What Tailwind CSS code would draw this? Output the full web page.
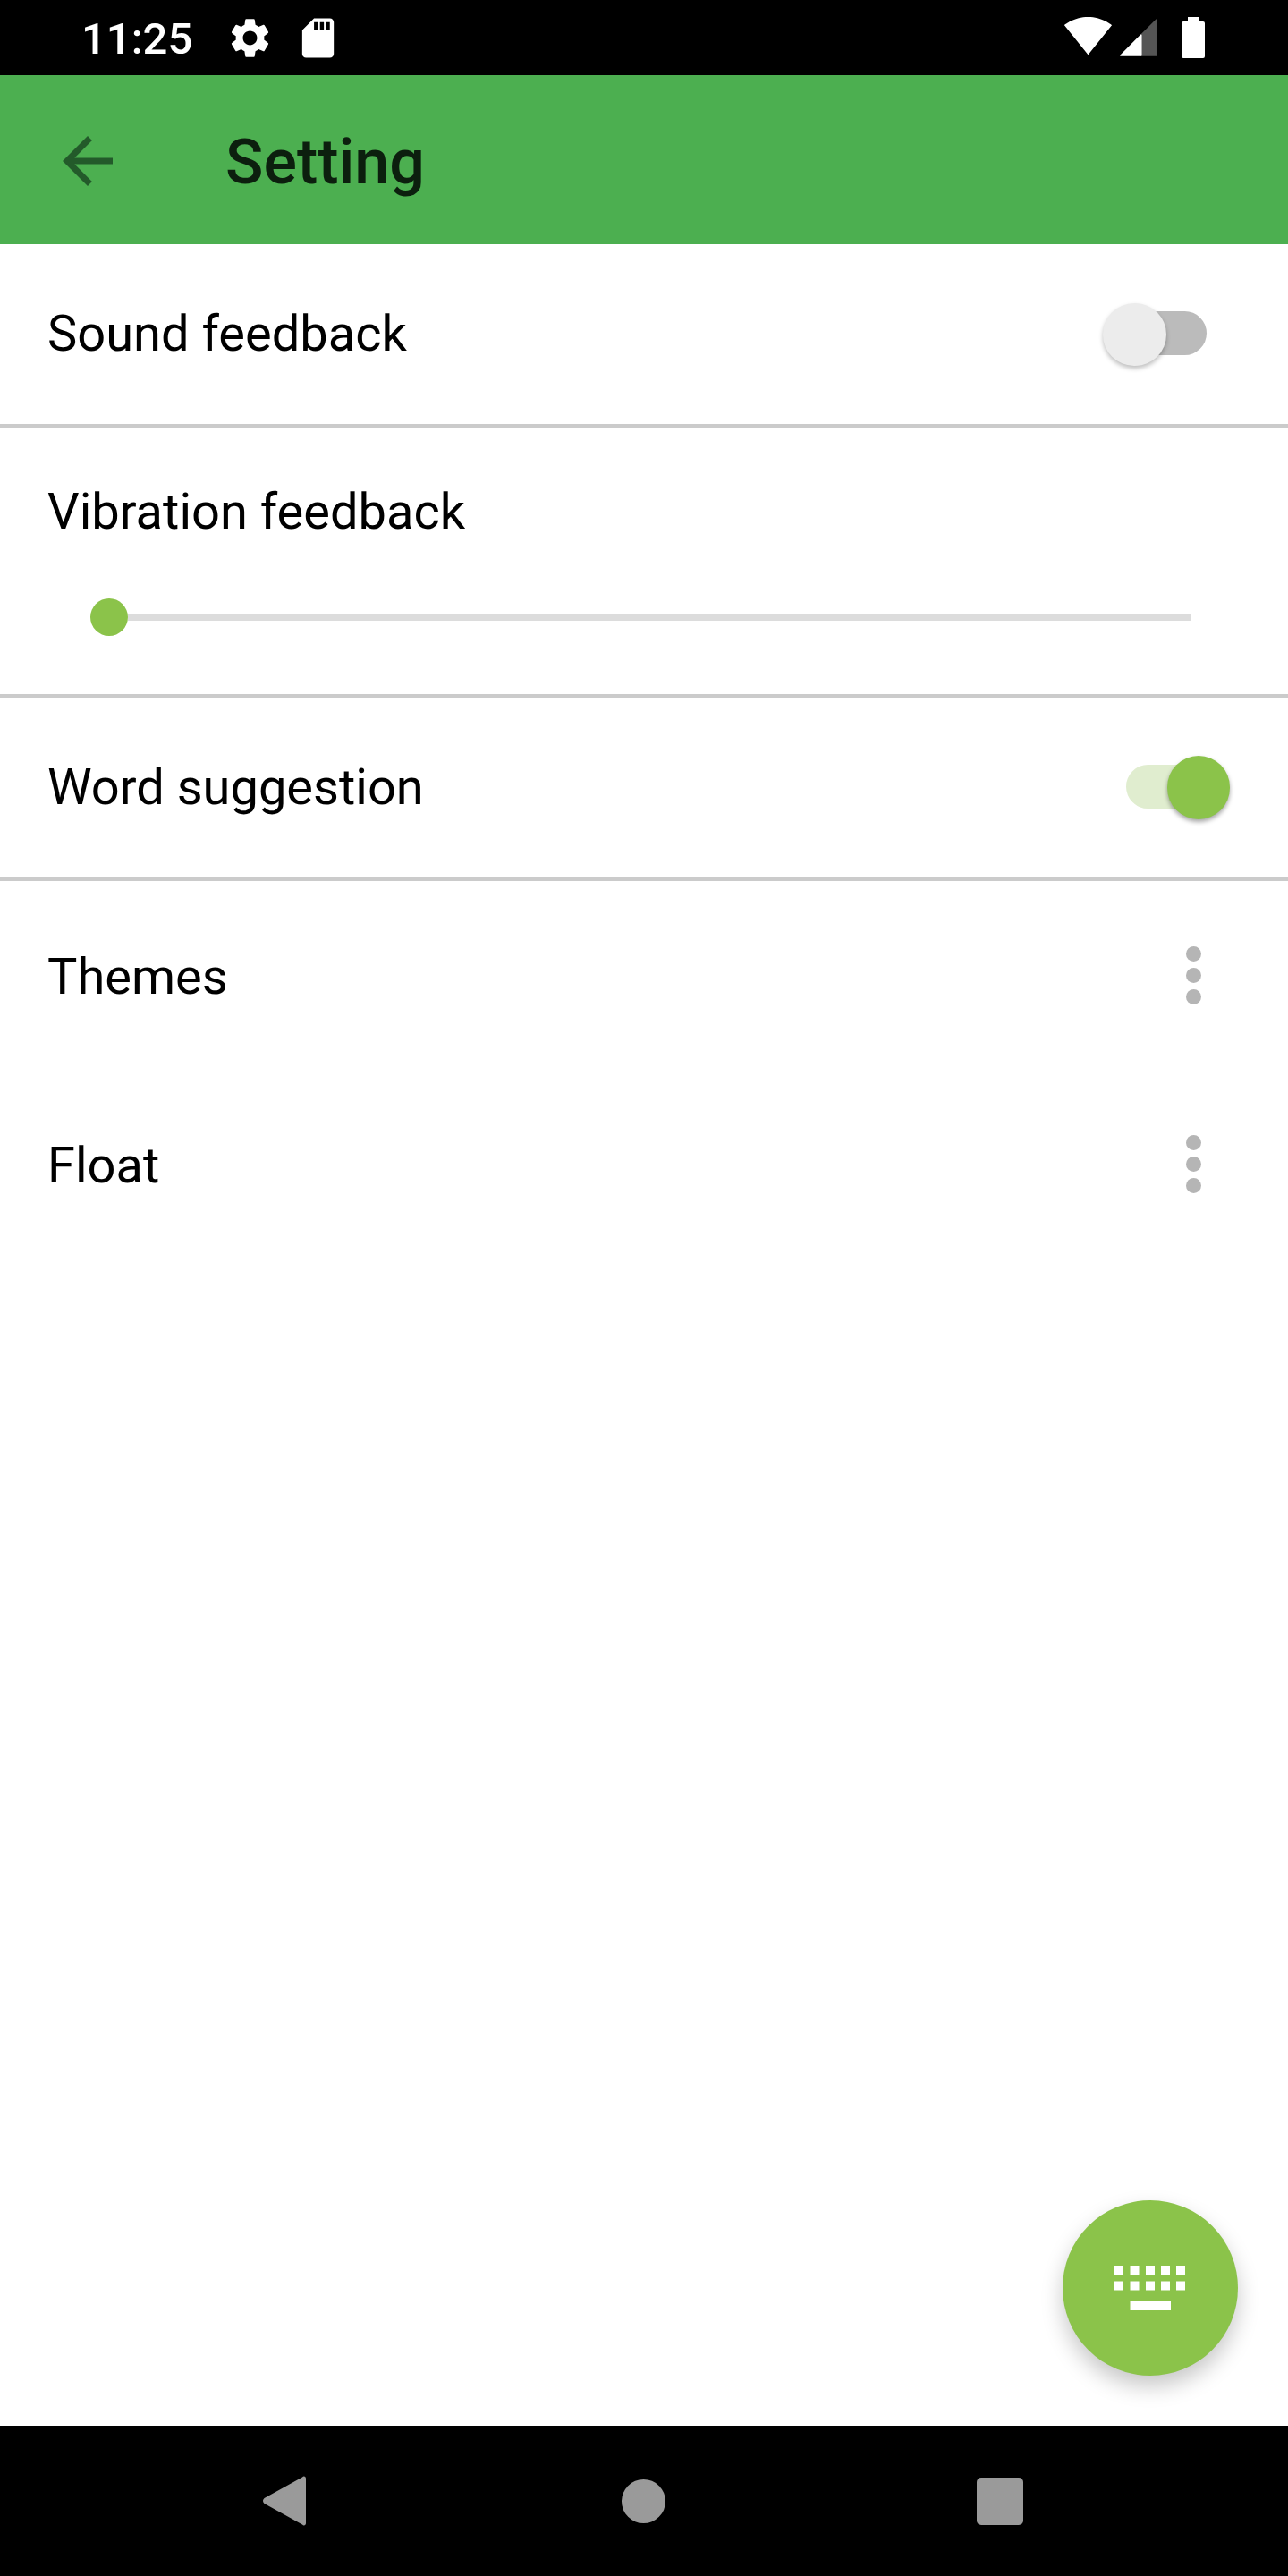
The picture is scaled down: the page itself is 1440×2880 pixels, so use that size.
<!DOCTYPE html>
<html><head><meta charset="utf-8"><script src="https://cdn.jsdelivr.net/npm/@tailwindcss/browser@4"></script></head>
<body class="bg-white">
<div class="w-[1440px] h-[2880px] flex flex-col bg-white font-['Roboto',sans-serif] text-black">
  <!-- status bar -->
  <div class="h-[84px] bg-black flex items-center shrink-0">
    <span class="ml-[91px] w-[162px] text-[49px] leading-none font-medium text-white mt-[2px]">11:25</span>
    <svg class="w-[53px] h-[53px]" viewBox="0 0 24 24" fill="#fff"><path d="M19.14 12.94c.04-.3.06-.61.06-.94 0-.32-.02-.64-.07-.94l2.03-1.58a.49.49 0 0 0 .12-.61l-1.92-3.32a.488.488 0 0 0-.59-.22l-2.39.96c-.5-.38-1.03-.7-1.62-.94l-.36-2.54a.484.484 0 0 0-.48-.41h-3.84c-.24 0-.43.17-.47.41l-.36 2.54c-.59.24-1.13.57-1.62.94l-2.39-.96c-.22-.08-.47 0-.59.22L2.74 8.87c-.12.21-.08.47.12.61l2.03 1.58c-.05.3-.09.63-.09.94s.02.64.07.94l-2.03 1.58a.49.49 0 0 0-.12.61l1.92 3.32c.12.22.37.29.59.22l2.39-.96c.5.38 1.03.7 1.62.94l.36 2.54c.05.24.24.41.48.41h3.84c.24 0 .44-.17.47-.41l.36-2.54c.59-.24 1.13-.56 1.62-.94l2.39.96c.22.08.47 0 .59-.22l1.92-3.32c.12-.22.07-.47-.12-.61l-2.01-1.58zM12 15.6c-1.98 0-3.6-1.62-3.6-3.6s1.62-3.6 3.6-3.6 3.6 1.62 3.6 3.6-1.62 3.6-3.6 3.6z"/></svg>
    <svg class="ml-[23px] w-[53px] h-[53px]" viewBox="0 0 24 24" fill="#fff"><path d="M18 2h-8L4.02 8 4 20c0 1.1.9 2 2 2h12c1.1 0 2-.9 2-2V4c0-1.1-.9-2-2-2zm-6 6h-2V4h2v4zm3 0h-2V4h2v4zm3 0h-2V4h2v4z"/></svg>
    <svg class="ml-auto w-[55px] h-[55px] -mt-[6px]" viewBox="0 0 24 24" fill="#fff"><path d="M12.01 21.49L23.64 7c-.45-.34-4.93-4-11.64-4C5.28 3 .81 6.66.36 7l11.64 14.49.01.01.01-.01z"/></svg>
    <svg class="ml-[4px] w-[50px] h-[50px]" viewBox="0 0 24 24"><path d="M13.3 21.6H21.6V2.4L13.3 10.7z" fill="#555" stroke="#555" stroke-width=".8" stroke-linejoin="round"/><path d="M2.4 21.6H13.3V10.7z" fill="#fff" stroke="#fff" stroke-width=".8" stroke-linejoin="round"/></svg>
    <svg class="ml-[23px] mr-[93px] w-[26px] h-[46px]" viewBox="0 0 26 46" fill="#fff"><path d="M7 0h12v5h5a2 2 0 0 1 2 2v37a2 2 0 0 1-2 2H2a2 2 0 0 1-2-2V7a2 2 0 0 1 2-2h5z"/></svg>
  </div>
  <!-- app bar -->
  <div class="h-[189px] bg-[#4caf50] flex items-center shrink-0">
    <svg class="ml-[56px] w-[84px] h-[84px] mt-[2px]" viewBox="0 0 24 24" fill="#235a2a"><path d="M20 11H7.83l5.59-5.59L12 4l-8 8 8 8 1.41-1.41L7.83 13H20v-2z"/></svg>
    <span class="ml-[112px] text-[70px] leading-none font-medium text-[#0c1f0e] mt-[4px]">Setting</span>
  </div>
  <!-- rows -->
  <div class="h-[201px] flex items-center pl-[53px] shrink-0 relative">
    <span class="text-[56px] leading-none -mt-[1px]">Sound feedback</span>
    <div class="absolute left-[1260px] top-[75px] w-[89px] h-[49px] rounded-full bg-[#bbbbbb]"></div>
    <div class="absolute left-[1233px] top-[66px] w-[71px] h-[70px] rounded-full bg-[#ececec] shadow-[0_3px_5px_rgba(0,0,0,0.25)]"></div>
  </div>
  <div class="h-[4px] bg-[#cbcbcb] shrink-0"></div>
  <div class="h-[298px] pl-[53px] shrink-0 flex flex-col">
    <span class="text-[56px] leading-none mt-[66px]">Vibration feedback</span>
    <div class="flex items-center mt-[69px] ml-[48px]">
      <div class="w-[42px] h-[42px] rounded-full bg-[#8bc34a]"></div>
      <div class="w-[1189px] h-[7px] bg-[#dcdcdc]"></div>
    </div>
  </div>
  <div class="h-[4px] bg-[#cbcbcb] shrink-0"></div>
  <div class="h-[201px] flex items-center pl-[53px] shrink-0 relative">
    <span class="text-[56px] leading-none -mt-[2px]">Word suggestion</span>
    <div class="absolute left-[1259px] top-[75px] w-[89px] h-[49px] rounded-full bg-[#e0edcf]"></div>
    <div class="absolute left-[1305px] top-[65px] w-[70px] h-[71px] rounded-full bg-[#8bc34a] shadow-[0_3px_5px_rgba(0,0,0,0.35)]"></div>
  </div>
  <div class="h-[4px] bg-[#cbcbcb] shrink-0"></div>
  <div class="h-[211px] flex items-center justify-between pl-[53px] pr-[97px] shrink-0">
    <span class="text-[56px] leading-none mt-[2px]">Themes</span>
    <div class="flex flex-col gap-[7px]">
      <div class="w-[17px] h-[17px] rounded-full bg-[#b5b5b5]"></div>
      <div class="w-[17px] h-[17px] rounded-full bg-[#b5b5b5]"></div>
      <div class="w-[17px] h-[17px] rounded-full bg-[#b5b5b5]"></div>
    </div>
  </div>
  <div class="h-[211px] flex items-center justify-between pl-[53px] pr-[97px] shrink-0">
    <span class="text-[56px] leading-none mt-[2px]">Float</span>
    <div class="flex flex-col gap-[7px]">
      <div class="w-[17px] h-[17px] rounded-full bg-[#b5b5b5]"></div>
      <div class="w-[17px] h-[17px] rounded-full bg-[#b5b5b5]"></div>
      <div class="w-[17px] h-[17px] rounded-full bg-[#b5b5b5]"></div>
    </div>
  </div>
  <div class="flex-1 relative">
    <div class="absolute right-[56px] bottom-[56px] w-[196px] h-[196px] rounded-full bg-[#8bc34a] shadow-[0_12px_24px_rgba(0,0,0,0.22)] flex items-center justify-center">
      <svg class="w-[79px] h-[50px] ml-[-1px]" viewBox="0 0 79 50" fill="#fff">
        <rect x="0" y="0" width="10" height="10"/><rect x="17.5" y="0" width="10" height="10"/><rect x="35" y="0" width="10" height="10"/><rect x="52" y="0" width="10" height="10"/><rect x="69" y="0" width="10" height="10"/>
        <rect x="0" y="17.5" width="10" height="10"/><rect x="17.5" y="17.5" width="10" height="10"/><rect x="35" y="17.5" width="10" height="10"/><rect x="52" y="17.5" width="10" height="10"/><rect x="69" y="17.5" width="10" height="10"/>
        <rect x="17.5" y="39.5" width="45.5" height="10.5"/>
      </svg>
    </div>
  </div>
  <!-- nav bar -->
  <div class="h-[168px] bg-black flex items-center shrink-0">
    <svg class="ml-[294px] w-[48px] h-[56px]" viewBox="0 0 48 56" fill="#9a9a9a"><path d="M44 1.5c1.6-1.8 4-.8 4 1.500v50c0 2.300-2.400 3.300-4 1.500L1.500 31c-2-2-2-4 0-6z"/></svg>
    <div class="ml-[353px] w-[49px] h-[49px] rounded-full bg-[#9a9a9a]"></div>
    <div class="ml-[348px] w-[52px] h-[53px] rounded-[5px] bg-[#9a9a9a]"></div>
  </div>
</div>
</body></html>
